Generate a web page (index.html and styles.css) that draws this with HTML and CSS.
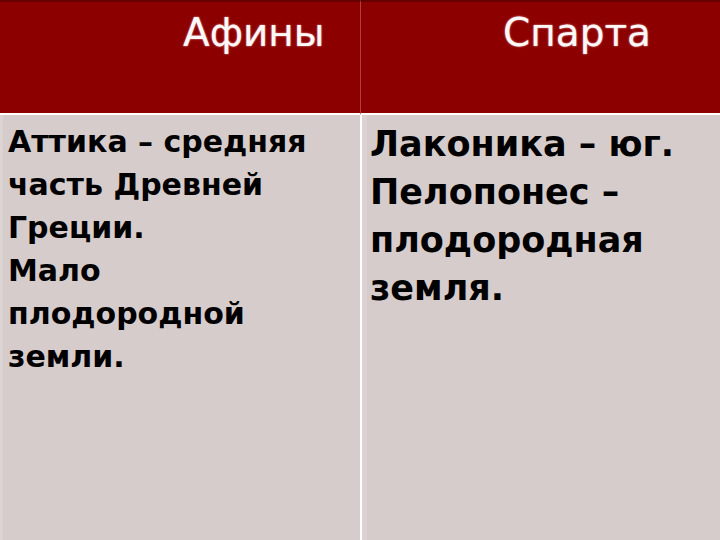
FILE: index.html
```html
<!DOCTYPE html>
<html lang="ru">
<head>
<meta charset="utf-8">
<title>Афины и Спарта</title>
<link rel="stylesheet" href="styles.css">
</head>
<body>
<div class="table">
  <div class="head head-left"><span class="title title-athens">Афины</span></div>
  <div class="head head-right"><span class="title title-sparta">Спарта</span></div>
  <div class="cell cell-left">
    <p class="txt txt-small">Аттика – средняя<br>часть Древней<br>Греции.<br>Мало<br>плодородной<br>земли.</p>
  </div>
  <div class="cell cell-right">
    <p class="txt txt-big">Лаконика – юг.<br>Пелопонес –<br>плодородная<br>земля.</p>
  </div>
</div>
</body>
</html>
```
FILE: styles.css
```css
html, body {
  margin: 0;
  padding: 0;
  width: 720px;
  height: 540px;
  overflow: hidden;
  background: #d6cccb;
}
.table {
  display: grid;
  grid-template-columns: 360px 360px;
  grid-template-rows: 113px 427px;
  width: 720px;
  height: 540px;
  font-family: "DejaVu Sans", "Liberation Sans", sans-serif;
}
.head {
  background: #8c0000;
  border-top: 2px solid #650000;
  border-bottom: 2px solid #ffffff;
  box-sizing: border-box;
  height: 115px;
}
.head-right {
  border-left: 1px solid #b04040;
}
.title {
  display: block;
  color: #fff8f8;
  font-size: 39px;
  line-height: 40px;
  padding-top: 11px;
  text-shadow: 0 0 2px #e8b0b0;
}
.title-athens { padding-left: 183px; }
.title-sparta { padding-left: 142px; }
.cell {
  background: #d6cccb;
  box-sizing: border-box;
  padding-top: 5px;
  margin-top: 2px;
}
.cell-left {
  border-left: 3px solid #ddd5d4;
  padding-left: 5px;
}
.cell-right {
  border-left: 2px solid #ffffff;
  box-shadow: inset 5px 0 0 #dcd2d1;
  padding-left: 8px;
}
.txt {
  margin: 0;
  color: #000;
  font-weight: bold;
  white-space: nowrap;
}
.txt-small {
  font-size: 30px;
  line-height: 43px;
}
.txt-big {
  font-size: 35px;
  line-height: 48px;
}
```
